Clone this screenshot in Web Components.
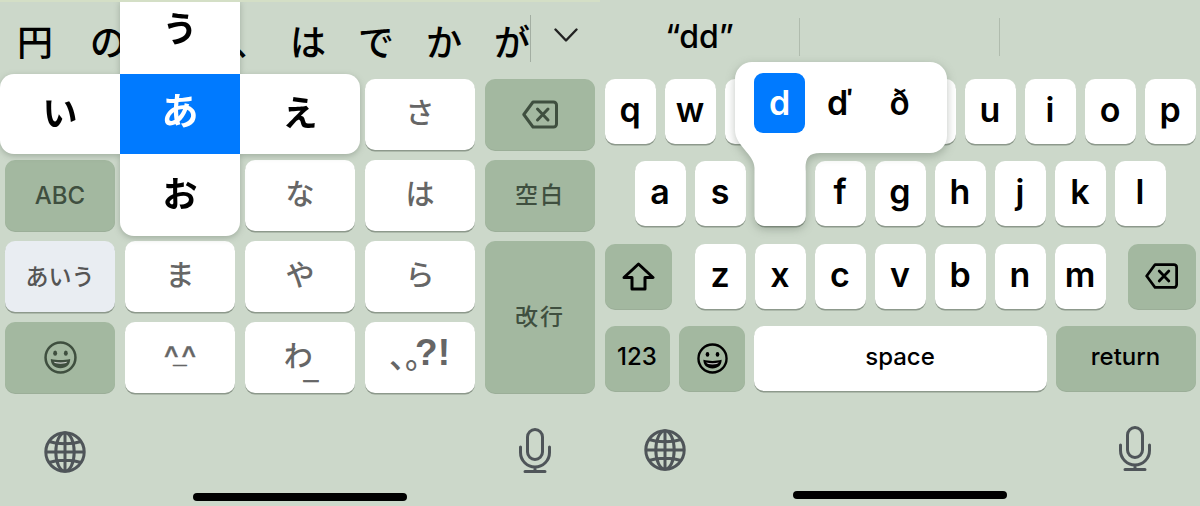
<!DOCTYPE html>
<html lang="ja">
<head>
<meta charset="utf-8">
<title>Keyboards</title>
<style>
  html, body { margin: 0; height: 100%; background: #ccd8ca; }
</style>
</head>
<body>
<kb-app></kb-app>
<script>
const ICONS = {
    globe: `<svg viewBox="0 0 42 42" fill="none" stroke="currentColor" stroke-width="3"><circle cx="21" cy="21" r="19.2"/><ellipse cx="21" cy="21" rx="9.2" ry="19.2"/><path d="M21 2v38M2 21h38M5 10.5c9 3 23 3 32 0M5 31.5c9-3 23-3 32 0"/></svg>`,
    mic: `<svg viewBox="0 0 32 45" fill="none" stroke="currentColor" stroke-width="3" stroke-linecap="round"><rect x="8.5" y="1.5" width="15" height="30" rx="7.5"/><path d="M1.5 19v5.5a14.5 14.5 0 0 0 29 0V19M16 39v4.5M6 43.5h20"/></svg>`,
    smile: `<svg viewBox="0 0 34 34" fill="none" stroke="currentColor" stroke-width="2.6"><circle cx="17" cy="17" r="15.4"/><ellipse cx="11.5" cy="12.5" rx="2" ry="2.6" fill="currentColor" stroke="none"/><ellipse cx="22.5" cy="12.5" rx="2" ry="2.6" fill="currentColor" stroke="none"/><path d="M7 18.5c6 1.5 14 1.5 20 0c0 6-4 9.500-10 9.500s-10-3.500-10-9.500z" fill="currentColor" stroke="none"/><path d="M10 21.500c4.500 .8 9.500 .8 14 0c-.8 1.500-3 2-7 2s-6.200-.5-7-2z" fill="#fff" stroke="none" opacity=".75"/></svg>`,
    backspace: `<svg viewBox="0 0 36 29" fill="none" stroke="currentColor" stroke-width="3" stroke-linejoin="round" stroke-linecap="round"><path d="M11 2h20.500a3 3 0 0 1 3 3v19a3 3 0 0 1-3 3H11L1.800 14.500z"/><path d="M15.500 9l10.500 11M26 9L15.500 20"/></svg>`,
    shift: `<svg viewBox="0 0 33 29" fill="none" stroke="currentColor" stroke-width="3" stroke-linejoin="round"><path d="M16.500 2L31 15.500h-8V27H10V15.500H2z"/></svg>`,
    chevron: `<svg viewBox="0 0 24 14" fill="none" stroke="currentColor" stroke-width="2.4" stroke-linecap="round" stroke-linejoin="round"><path d="M1.500 1.500L12 12.500L22.500 1.500"/></svg>`
};

class KbIcon extends HTMLElement {
    connectedCallback() {
        const w = this.getAttribute('w') || 24;
        const h = this.getAttribute('h') || 24;
        this.attachShadow({ mode: 'open' });
        this.shadowRoot.innerHTML = `
            <style>
                :host { display: block; width: ${w}px; height: ${h}px; flex: none; }
                svg { display: block; width: 100%; height: 100%; }
            </style>
            ${ICONS[this.getAttribute('name')]}
        `;
    }
}

class KbKey extends HTMLElement {
    constructor() {
        super();
        this.attachShadow({ mode: 'open' });
        this.shadowRoot.innerHTML = `
            <style>
                :host {
                    display: flex;
                    align-items: center;
                    justify-content: center;
                    min-width: 0;
                    background: #fff;
                    border-radius: 10px;
                    box-shadow: 0 1.5px 0 #8d998c;
                    color: inherit;
                }
                :host([variant="special"]) { background: #a3b8a0; box-shadow: 0 1px 0 #9bae98; }
                :host([variant="pale"]) { background: #e9edf2; }
            </style>
            <slot></slot>
        `;
    }
}

class KbToolbar extends HTMLElement {
    constructor() {
        super();
        this.attachShadow({ mode: 'open' });
        this.shadowRoot.innerHTML = `
            <style>
                :host { display: block; color: #4f5559; }
                .icons {
                    display: flex;
                    align-items: flex-end;
                    justify-content: space-between;
                    height: 45px;
                    margin-top: 35px;
                    padding: 0 49px 0 44px;
                }
                .home {
                    width: 214px;
                    height: 8px;
                    margin: 20px auto 0;
                    border-radius: 4px;
                    background: #000;
                }
            </style>
            <div class="icons">
                <kb-icon name="globe" w="42" h="42"></kb-icon>
                <kb-icon name="mic" w="32" h="45"></kb-icon>
            </div>
            <div class="home"></div>
        `;
    }
}

class FlickPopup extends HTMLElement {
    constructor() {
        super();
        this.attachShadow({ mode: 'open' });
        this.shadowRoot.innerHTML = `
            <style>
                :host {
                    position: absolute;
                    left: 0;
                    top: -2px;
                    display: grid;
                    grid-template-columns: repeat(3, 120px);
                    grid-template-rows: 74px 80px 82px;
                    filter: drop-shadow(0 2px 3px rgba(60, 75, 60, .3));
                    font: 700 35px "Noto Sans CJK JP", sans-serif;
                    color: #000;
                }
                div {
                    display: flex;
                    align-items: center;
                    justify-content: center;
                    background: #fff;
                }
                .up { grid-area: 1 / 2; padding-bottom: 22px; }
                .left { grid-area: 2 / 1; border-radius: 14px 0 0 14px; padding-bottom: 8px; }
                .center { grid-area: 2 / 2; background: #007aff; color: #fff; font-size: 37px; padding-bottom: 10px; }
                .right { grid-area: 2 / 3; border-radius: 0 14px 14px 0; padding-bottom: 8px; }
                .down { grid-area: 3 / 2; border-radius: 0 0 14px 14px; padding-bottom: 8px; }
            </style>
            <div class="up">う</div>
            <div class="left">い</div>
            <div class="center">あ</div>
            <div class="right">え</div>
            <div class="down">お</div>
        `;
    }
}

class JpKeyboard extends HTMLElement {
    constructor() {
        super();
        this.attachShadow({ mode: 'open' });
        this.shadowRoot.innerHTML = `
            <style>
                :host {
                    display: block;
                    position: relative;
                    width: 600px;
                    height: 506px;
                    overflow: hidden;
                    font-family: "Noto Sans CJK JP", sans-serif;
                    border-top: 2px solid #d4dfc6;
                    box-sizing: border-box;
                }
                .candidates {
                    display: flex;
                    align-items: center;
                    gap: 32px;
                    height: 76.5px;
                    padding: 0 0 0 17px;
                    box-sizing: border-box;
                    font-size: 36px;
                    font-weight: 500;
                    line-height: 1;
                    color: #000;
                }
                .candidates span { width: 36px; flex: none; }
                .candidates .c1 { margin-right: 5px; }
                .candidates .c3 { margin: 0 -11px 0 75px; }
                .sep { width: 1px; height: 47px; margin: -3px 0 0 -32px; background: #a3aea2; flex: none; }
                .chevron { margin: -10px 0 0 -9px; color: #222; }
                .grid {
                    display: grid;
                    grid-template-columns: repeat(5, 110px);
                    grid-template-rows: repeat(4, 71px);
                    gap: 10px;
                    padding-left: 5px;
                    font-size: 29px;
                    font-weight: 500;
                    color: #666;
                }
                .grid .k { padding-bottom: 7px; box-sizing: border-box; }
                .grid kb-key[variant="special"] { color: #3f4f3f; }
                .abc { font: 500 24px Inter, sans-serif; }
                .word { font-size: 23px; letter-spacing: 2px; padding-bottom: 4px; }
                .aiu { font-size: 23px; color: #555; padding-bottom: 2px; }
                .enter { grid-column: 5; grid-row: 3 / 5; }
                .face { font: 700 24px "Liberation Sans", sans-serif; letter-spacing: -5px; padding: 0 5px 4px 0; -webkit-text-stroke: .4px #666; }
                .wa { display: flex; align-items: flex-end; padding: 0 0 6px 2px; }
                .wa span { display: block; line-height: 26px; height: 26px; }
                .wa i { display: block; font: 400 26px/10px "Liberation Sans", sans-serif; height: 10px; margin: 0 0 -6px -9px; -webkit-text-stroke: .6px #666; }
                .punct { font: 700 37px "Liberation Sans", sans-serif; white-space: nowrap; padding: 0 1px 6px 0; }
                .punct b { font: 500 32px "Noto Sans CJK JP", sans-serif; vertical-align: -3px; }
                .punct b + b { letter-spacing: -22px; }
            </style>
            <div class="candidates">
                <span class="c1">円</span><span>の</span><span class="c3">、</span><span>は</span><span>で</span><span>か</span><span>が</span>
                <div class="sep"></div>
                <kb-icon class="chevron" name="chevron" w="24" h="14"></kb-icon>
            </div>
            <div class="grid">
                <kb-key></kb-key><kb-key></kb-key><kb-key></kb-key>
                <kb-key class="k">さ</kb-key>
                <kb-key variant="special"><kb-icon name="backspace" w="36" h="29"></kb-icon></kb-key>
                <kb-key variant="special"><span class="abc">ABC</span></kb-key>
                <kb-key></kb-key>
                <kb-key class="k">な</kb-key>
                <kb-key class="k">は</kb-key>
                <kb-key variant="special"><span class="word">空白</span></kb-key>
                <kb-key variant="pale"><span class="aiu">あいう</span></kb-key>
                <kb-key class="k">ま</kb-key>
                <kb-key class="k">や</kb-key>
                <kb-key class="k">ら</kb-key>
                <kb-key class="enter" variant="special"><span class="word">改行</span></kb-key>
                <kb-key variant="special"><kb-icon name="smile" w="33" h="33"></kb-icon></kb-key>
                <kb-key><span class="face">^_^</span></kb-key>
                <kb-key><div class="wa"><span>わ</span><i>_</i></div></kb-key>
                <kb-key><span class="punct"><b>、</b><b>。</b>?!</span></kb-key>
            </div>
            <kb-toolbar></kb-toolbar>
            <flick-popup></flick-popup>
        `;
    }
}

class AccentPopup extends HTMLElement {
    constructor() {
        super();
        this.attachShadow({ mode: 'open' });
        this.shadowRoot.innerHTML = `
            <style>
                :host {
                    position: absolute;
                    left: 134.5px;
                    top: 61.5px;
                    width: 212px;
                    height: 164px;
                    font: 600 34px Inter, sans-serif;
                    color: #000;
                }
                svg {
                    position: absolute;
                    inset: 0;
                    overflow: visible;
                    filter: drop-shadow(0 3px 5px rgba(60, 75, 60, .32));
                }
                .options {
                    position: relative;
                    display: flex;
                    gap: 9px;
                    padding: 11px 0 0 19.500px;
                }
                .options span {
                    display: flex;
                    align-items: center;
                    justify-content: center;
                    width: 51px;
                    height: 60px;
                    border-radius: 9px;
                }
                .options .on { background: #007aff; color: #fff; }
            </style>
            <svg viewBox="0 0 212 164" width="212" height="164">
                <path fill="#fff" d="M17 0H195a17 17 0 0 1 17 17V74a17 17 0 0 1-17 17H85C74 91 70.500 96 70.500 106V154a10 10 0 0 1-10 10H29.500a10 10 0 0 1-10-10V106C19.500 92 0 84 0 68V17A17 17 0 0 1 17 0z"/>
            </svg>
            <div class="options">
                <span class="on">d</span><span>ď</span><span>ð</span>
            </div>
        `;
    }
}

class EnKeyboard extends HTMLElement {
    constructor() {
        super();
        this.attachShadow({ mode: 'open' });
        const keys = (s) => [...s].map((c) => `<kb-key>${c === '.' ? '' : c}</kb-key>`).join('');
        this.shadowRoot.innerHTML = `
            <style>
                :host {
                    display: block;
                    position: relative;
                    width: 600px;
                    height: 506px;
                    overflow: hidden;
                    font: 600 34px Inter, sans-serif;
                    color: #000;
                }
                .suggestions { display: flex; height: 78.5px; }
                .suggestions div { flex: none; width: 200px; display: flex; align-items: center; justify-content: center; }
                .suggestions .word { font-size: 32px; font-weight: 500; padding: 0 0 6px 0; box-sizing: border-box; }
                .suggestions .rule { width: 1px; height: 38px; margin-top: 18px; background: #b0bcae; }
                .suggestions .gap { width: 199px; }
                .rows { display: flex; flex-direction: column; gap: 17.500px; padding: 0 4.500px; }
                .row { display: flex; justify-content: center; gap: 9px; height: 65px; }
                .row kb-key { width: 51px; flex: none; padding-bottom: 4px; box-sizing: border-box; }
                .row.split { justify-content: space-between; }
                .row.split > div { display: flex; gap: 9px; }
                .row .mod { width: 67.500px; padding: 0; }
                .row.bottom { gap: 0; justify-content: flex-start; font-size: 24px; font-weight: 500; }
                .bottom .n123 { width: 65px; margin-right: 9.500px; }
                .bottom .emoji { width: 66px; margin-right: 8.500px; padding: 0; }
                .bottom .space { width: 293px; margin-right: 9px; }
                .bottom .ret { width: 140px; }
            </style>
            <div class="suggestions">
                <div class="word" style="width:199px">“dd”</div>
                <div class="rule"></div>
                <div class="gap"></div>
                <div class="rule"></div>
            </div>
            <div class="rows">
                <div class="row">${keys('qw....uiop')}</div>
                <div class="row">${keys('as.fghjkl')}</div>
                <div class="row split">
                    <kb-key class="mod" variant="special"><kb-icon name="shift" w="33" h="29"></kb-icon></kb-key>
                    <div>${keys('zxcvbnm')}</div>
                    <kb-key class="mod" variant="special"><kb-icon name="backspace" w="33" h="28"></kb-icon></kb-key>
                </div>
                <div class="row bottom">
                    <kb-key class="n123" variant="special">123</kb-key>
                    <kb-key class="emoji" variant="special"><kb-icon name="smile" w="31" h="31"></kb-icon></kb-key>
                    <kb-key class="space">space</kb-key>
                    <kb-key class="ret" variant="special">return</kb-key>
                </div>
            </div>
            <kb-toolbar></kb-toolbar>
            <accent-popup></accent-popup>
        `;
    }
}

class KbApp extends HTMLElement {
    constructor() {
        super();
        this.attachShadow({ mode: 'open' });
        this.shadowRoot.innerHTML = `
            <style>
                :host { display: flex; width: 1200px; height: 506px; background: #ccd8ca; }
            </style>
            <jp-keyboard></jp-keyboard>
            <en-keyboard></en-keyboard>
        `;
    }
}

customElements.define('kb-icon', KbIcon);
customElements.define('kb-key', KbKey);
customElements.define('kb-toolbar', KbToolbar);
customElements.define('flick-popup', FlickPopup);
customElements.define('accent-popup', AccentPopup);
customElements.define('jp-keyboard', JpKeyboard);
customElements.define('en-keyboard', EnKeyboard);
customElements.define('kb-app', KbApp);
</script>
</body>
</html>
